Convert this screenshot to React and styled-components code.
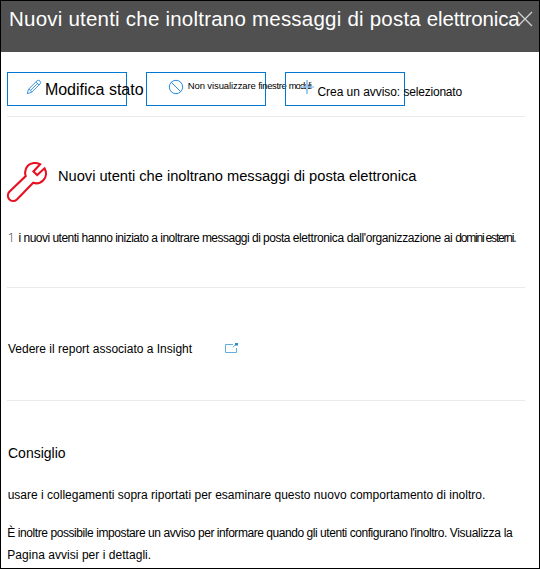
import React from 'react';
import styled, { createGlobalStyle } from 'styled-components';

const GlobalStyle = createGlobalStyle`
  *, *::before, *::after { box-sizing: border-box; }
  body { margin: 0; background: #fff; }
`;

const Panel = styled.main`
  width: 540px;
  height: 569px;
  border: 1px solid #000;
  background: #fff;
  color: #000;
  font-family: "Liberation Sans", Arial, sans-serif;
  overflow: hidden;
`;

const Header = styled.header`
  display: flex;
  height: 51px;
  padding: 3px 6px 0 8px;
  background: #505050;
  color: #fff;
`;

const Title = styled.h1`
  flex: none;
  margin: 0;
  font-size: 20.5px;
  font-weight: 400;
  line-height: 30px;
  white-space: pre;
`;

const Run = styled.span`
  letter-spacing: ${({ $track }) => $track || 0}px;
`;

const CloseButton = styled.button`
  flex: none;
  width: 16px;
  height: 16px;
  margin: 7px 0 0 -2px;
  padding: 0;
  border: 0;
  background: none;
  color: #d2d2d2;
  svg { display: block; }
`;

const Body = styled.div`
  padding: 20px 14px 0 6px;
`;

const Toolbar = styled.div`
  display: flex;
  gap: 19px;
  height: 34px;
  margin-bottom: 10px;
`;

const Action = styled.button`
  display: flex;
  align-items: flex-start;
  flex: none;
  width: 120px;
  height: 34px;
  padding: 0 0 0 ${({ $inset }) => $inset}px;
  border: 1px solid #0078d4;
  background: transparent;
  color: #000;
  font-family: inherit;
  text-align: left;
  svg { flex: none; display: block; margin-top: 6px; }
`;

const ActionLabel = styled.span`
  flex: none;
  margin: ${({ $top }) => $top}px 0 0 ${({ $gap }) => $gap}px;
  font-size: ${({ $size }) => $size}px;
  line-height: 20px;
  white-space: pre;
`;

const Section = styled.section`
  height: ${({ $height }) => $height}px;
  border-top: 1px solid #eaeaea;
`;

const Summary = styled.div`
  display: flex;
  margin-top: 45px;
  height: 40px;
  gap: 10px;
  svg { flex: none; display: block; }
`;

const Heading = styled.h2`
  margin: ${({ $top }) => $top || 0}px 0 0 ${({ $indent }) => $indent || 0}px;
  font-size: ${({ $size }) => $size}px;
  font-weight: 400;
  line-height: 24px;
  white-space: pre;
  letter-spacing: ${({ $track }) => $track || 0}px;
`;

const Text = styled.p`
  margin: ${({ $top }) => $top || 0}px 0 0 ${({ $indent }) => $indent || 0}px;
  font-size: 12px;
  line-height: 22px;
  white-space: pre;
`;

const Count = styled.span`
  display: inline-block;
  width: 11px;
  color: #444;
  font-family: "Open Sans", sans-serif;
  font-weight: 300;
  font-size: 13px;
  line-height: 20px;
`;

const ReportLink = styled.a`
  display: flex;
  align-items: flex-start;
  padding-top: 50px;
  color: inherit;
  text-decoration: none;
  svg { display: block; margin: 4px 0 0 32px; }
`;

const CloseIcon = () => (
  <svg width="16" height="16" viewBox="0 0 16 16" fill="none" stroke="currentColor" strokeWidth="1.3">
    <path d="M1 1 15 15M15 1 1 15" />
  </svg>
);

const PencilIcon = () => (
  <svg width="16" height="16" viewBox="0 0 16 16" fill="none" stroke="#3f97df" strokeWidth="1">
    <path d="M1.2 14.6 2.6 10.2 11 1.8Q12.5.6 14 2 15.2 3.5 14 5L5.6 13.3ZM2.6 10.2Q5 10.6 5.6 13.3M9.9 3 12.9 6M11.3 4.6 4.6 11.3" />
  </svg>
);

const BlockIcon = () => (
  <svg width="16" height="16" viewBox="0 0 16 16" fill="none" stroke="#2b8bdb" strokeWidth="1">
    <circle cx="8" cy="8" r="6.7" />
    <path d="m3.3 3.3 9.4 9.4" />
  </svg>
);

const PlusIcon = () => (
  <svg width="14" height="16" viewBox="0 0 14 16" fill="none" stroke="#9cc9ee">
    <path d="M7 1v14" strokeWidth="2" />
    <path d="M0 8h14" strokeWidth="1.5" />
  </svg>
);

const WrenchIcon = () => (
  <svg width="41" height="41" viewBox="0.5 0.5 41 41" fill="none" stroke="#e81123" strokeWidth="2.1" strokeLinejoin="miter">
    <path d="M33.6 2.7C30 .9 24.7.9 21.5 4 18.6 7 18.1 11 19.2 14.6L2.9 30.2C1 32.4 1 35.7 2.8 37.9 4.8 40 8.3 40 10.4 37.9L26.7 21.3C30.4 22.4 34.4 21.4 36.8 18.8 39.9 15.6 40.3 10.8 38 6.8L30.7 13.6 26.9 10Z" />
  </svg>
);

const OpenIcon = () => (
  <svg width="15" height="12" viewBox="0 0 15 12" fill="none">
    <path d="M9 2.5H1.5V10.5H12.5V6" stroke="#62aedb" />
    <path d="M8.8 5.2 12 2.3" stroke="#62aedb" />
    <path d="M11 1h3v2.5h-3z" fill="#2a8cca" />
  </svg>
);

export default function App() {
  return (
    <>
      <GlobalStyle />
      <Panel>
        <Header>
          <Title>
            <Run $track={0.22}>Nuovi utenti che inoltrano messaggi di posta </Run>
            <Run $track={-0.18}>elettronica</Run>
          </Title>
          <CloseButton aria-label="Chiudi"><CloseIcon /></CloseButton>
        </Header>
        <Body>
          <Toolbar>
            <Action $inset={17.5}>
              <PencilIcon />
              <ActionLabel $size={16} $gap={3.4} $top={7}>Modifica stato</ActionLabel>
            </Action>
            <Action $inset={21}>
              <BlockIcon />
              <ActionLabel $size={9.5} $gap={3.7} $top={3}>
                <Run $track={-0.1}>Non visualizzare </Run>
                <Run $track={-0.39}>finestre </Run>
                <Run $track={-0.95}>modali</Run>
              </ActionLabel>
            </Action>
            <Action $inset={14}>
              <PlusIcon />
              <ActionLabel $size={12} $gap={3.5} $top={9}>
                <Run $track={-0.05}>Crea un avviso: </Run>
                <Run $track={-0.2}>selezionato</Run>
              </ActionLabel>
            </Action>
          </Toolbar>
          <Section $height={171}>
            <Summary>
              <WrenchIcon />
              <Heading $size={14.7} $top={2} $track={-0.03}>
                Nuovi utenti che inoltrano messaggi di posta elettronica
              </Heading>
            </Summary>
            <Text $top={25} $indent={0.5}>
              <Count>1</Count>
              <Run $track={-0.51}>i nuovi utenti hanno iniziato a inoltrare messaggi di posta </Run>
              <Run $track={-0.4}>elettronica dall'organizzazione ai </Run>
              <Run $track={-1.18}>domini </Run>
              <Run $track={-1.2}>esterni.</Run>
            </Text>
          </Section>
          <Section $height={113}>
            <ReportLink>
              <Text $indent={1}>Vedere il report associato a Insight</Text>
              <OpenIcon />
            </ReportLink>
          </Section>
          <Section $height={168}>
            <Heading $size={14} $top={40} $indent={1}>Consiglio</Heading>
            <Text $top={19} $indent={0.7}>
              <Run>usare i collegamenti sopra riportati </Run>
              <Run>per esaminare questo nuovo comportamento di inoltro.</Run>
            </Text>
            <Text $top={16} $indent={0.3}>
              <Run $track={-0.42}>È inoltre possibile impostare un avviso </Run>
              <Run $track={-0.45}>per informare quando gli utenti configurano l'inoltro. </Run>
              <Run $track={-0.28}>Visualizza la</Run>
              <br />
              <Run $track={0.04}>Pagina avvisi per i dettagli.</Run>
            </Text>
          </Section>
        </Body>
      </Panel>
    </>
  );
}
